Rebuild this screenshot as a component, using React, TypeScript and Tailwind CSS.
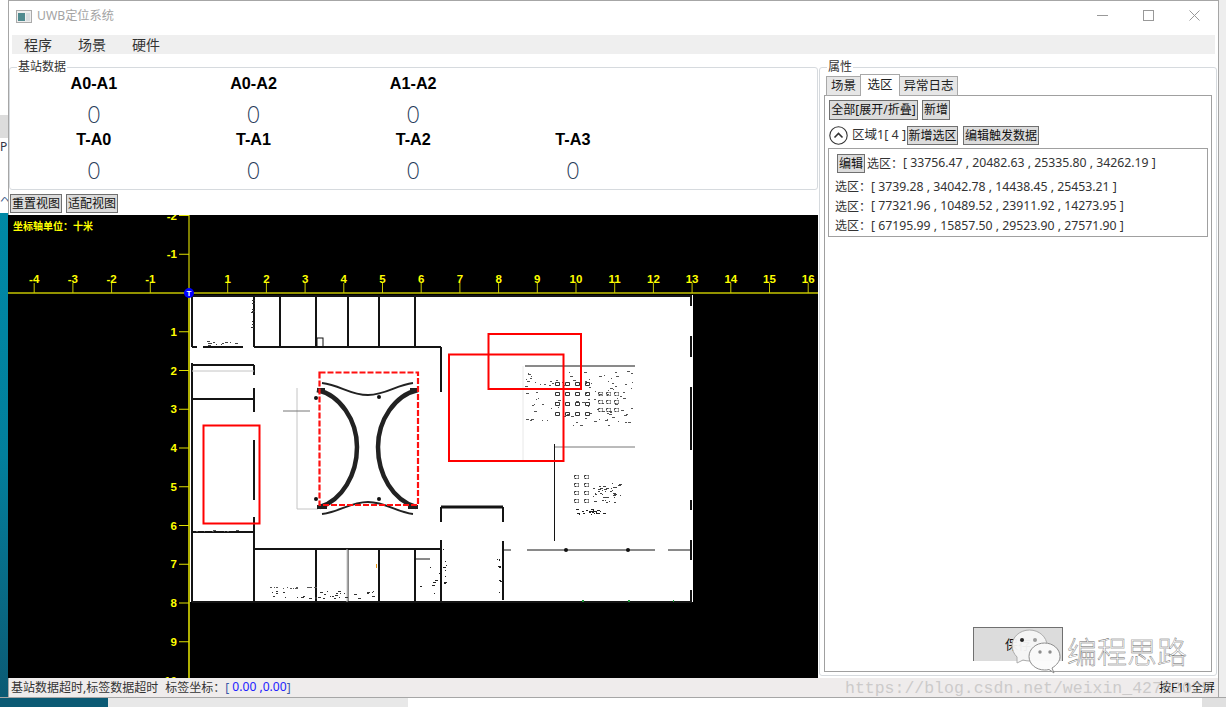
import React from "react";

const btn = "flex items-center justify-center bg-[#dcdcdc] border border-[#707070] text-[12px] text-[#111] leading-none whitespace-nowrap";

function specks(x0: number, y0: number, x1: number, y1: number, n: number, seed: number) {
  let s = seed;
  const r = () => {
    s = (s * 1103515245 + 12345) & 0x7fffffff;
    return s / 0x7fffffff;
  };
  let d = "";
  for (let i = 0; i < n; i++) {
    const x = Math.round(x0 + r() * (x1 - x0));
    const y = Math.round(y0 + r() * (y1 - y0));
    const w = 1 + Math.floor(r() * 3);
    d += `M${x} ${y}h${w}v1h-${w}z`;
  }
  return d;
}

function boxes(xs: number[], ys: number[]) {
  let d = "";
  for (const x of xs) for (const y of ys) d += `M${x}.5 ${y}.5h4v3h-4z`;
  return d;
}

const walls: [number, number, number, number, number?][] = [
  [192, 296, 692, 296, 2],
  [192, 296, 192, 347, 2],
  [192, 363, 192, 602, 2],
  [192, 602, 692, 602, 2],
  [254, 297, 254, 347, 2],
  [280, 297, 280, 347, 2],
  [316, 297, 316, 347, 2],
  [348, 297, 348, 347, 2],
  [379, 297, 379, 347, 2],
  [415, 297, 415, 347, 2],
  [192, 347, 197, 347, 2],
  [203, 347, 243, 347, 2],
  [254, 347, 441, 347, 2],
  [441, 347, 441, 392, 2],
  [192, 365, 254, 365, 2],
  [254, 365, 254, 375, 2],
  [254, 388, 254, 412, 2],
  [192, 399, 254, 399, 2],
  [254, 440, 254, 500, 2],
  [254, 517, 254, 602, 2],
  [192, 532, 254, 532, 2],
  [254, 549, 441, 549, 2],
  [316, 549, 316, 602, 2],
  [348, 549, 348, 602, 1],
  [379, 549, 379, 602, 2],
  [415, 549, 415, 602, 2],
  [441, 507, 503, 507, 3],
  [441, 507, 441, 522, 2],
  [441, 540, 441, 602, 2],
  [503, 507, 503, 522, 2],
  [503, 541, 503, 600, 2],
  [503, 550, 511, 550, 1],
  [527, 550, 655, 550, 1],
  [668, 550, 690, 550, 1],
  [554.5, 444, 554.5, 541, 1],
  [525, 366, 635, 366, 1],
  [691, 296, 691, 306, 2],
  [691, 336, 691, 357, 2],
  [691, 387, 691, 450, 2],
  [691, 500, 691, 510, 2],
  [691, 540, 691, 560, 2],
  [691, 590, 691, 602, 2],
  [415, 559, 430, 559, 1],
];

function Plan() {
  const xt = Array.from({ length: 21 }, (_, i) => i - 4).filter((n) => n !== 0);
  const yt = [-2, -1, 1, 2, 3, 4, 5, 6, 7, 8, 9, 10];
  const X = (n: number) => 189 + n * 38.7;
  const Y = (n: number) => 293 + n * 38.75;
  return (
    <svg viewBox="8 215 810 463" className="block w-[810px] h-[463px] -ml-px bg-black">
      <rect x="190" y="295" width="503" height="307" fill="#fff" />
      {walls.map(([a, b, c, d, w], i) => (
        <line key={i} x1={a} y1={b} x2={c} y2={d} stroke="#141414" strokeWidth={w ?? 1} />
      ))}
      <rect x="317" y="338" width="6" height="9" fill="none" stroke="#111" />
      <path d="M192 371H254M347 549V602M297 388V509H318" stroke="#c4c4c4" fill="none" />
      <path d="M283 411H310M555 447H635" stroke="#777" fill="none" />
      <path d="M523 366V460" stroke="#e8e8e8" fill="none" />
      <path d="M317 390C340 395 357 420 357 447C357 475 342 500 320 507" fill="none" stroke="#222" strokeWidth="4.5" />
      <path d="M418 390C395 395 378 420 378 447C378 475 393 500 416 507" fill="none" stroke="#222" strokeWidth="4.5" />
      <path d="M322 383C340 385 350 395 368 395C386 395 396 385 413 383" fill="none" stroke="#222" strokeWidth="2" />
      <path d="M322 514C340 512 350 502 368 502C386 502 396 512 413 514" fill="none" stroke="#222" strokeWidth="2" />
      <path d="M317 505h10v4h-10zM408 505h10v4h-10zM317 388h8v3h-8zM410 388h8v3h-8z" fill="#222" />
      <circle cx="316" cy="398" r="2" fill="#111" />
      <circle cx="379" cy="397" r="2" fill="#111" />
      <circle cx="316" cy="499" r="2" fill="#111" />
      <circle cx="379" cy="499" r="2" fill="#111" />
      <circle cx="566" cy="550" r="2" fill="#111" />
      <circle cx="628" cy="550" r="2" fill="#111" />
      <path d={specks(525, 370, 632, 426, 110, 7)} fill="#555" />
      <path d={boxes([555, 565, 575, 585], [382, 392, 402, 412])} fill="none" stroke="#333" />
      <path d={boxes([598, 606, 614], [392, 400, 408])} fill="none" stroke="#444" strokeDasharray="2 1" />
      <path d={boxes([574, 584], [475, 483, 491, 499])} fill="none" stroke="#333" strokeDasharray="2 1" />
      <path d={specks(592, 483, 620, 503, 40, 21)} fill="#444" />
      <path d={specks(574, 508, 604, 514, 22, 33)} fill="#222" />
      <path d={specks(205, 341, 240, 345, 12, 5)} fill="#444" />
      <path d={specks(251, 300, 252, 330, 8, 11)} fill="#333" />
      <path d={specks(265, 590, 380, 598, 36, 9)} fill="#333" />
      <path d={specks(256, 587, 315, 588, 18, 13)} fill="#555" />
      <path d={specks(194, 530, 240, 531, 8, 17)} fill="#555" />
      <path d={specks(418, 555, 440, 600, 7, 19)} fill="#222" />
      <path d={specks(443, 545, 446, 595, 8, 23)} fill="#222" />
      <path d={specks(497, 545, 501, 595, 8, 27)} fill="#222" />
      <path d="M582 600h2v2h-2zM628 600h2v2h-2zM673 600h1v2h-1z" fill="#1f9a3a" />
      <rect x="376" y="564" width="1" height="4" fill="#e59a1a" />

      <rect x="203.5" y="425.5" width="56" height="98" fill="none" stroke="#ff0000" strokeWidth="2" />
      <rect x="488.5" y="334" width="92.5" height="55" fill="none" stroke="#ff0000" strokeWidth="2" />
      <rect x="449" y="354.5" width="114.5" height="106.5" fill="none" stroke="#ff0000" strokeWidth="2" />
      <rect x="319.5" y="372.5" width="98.5" height="132.5" fill="none" stroke="#ff1010" strokeWidth="2.2" strokeDasharray="6 2" />

      <line x1="8" y1="293" x2="818" y2="293" stroke="#c4c400" strokeWidth="1.5" />
      <line x1="189" y1="215" x2="189" y2="678" stroke="#a8a800" strokeWidth="1.5" />
      <line x1="189" y1="296" x2="189" y2="678" stroke="#e0e000" strokeWidth="1" />
      {xt.map((n) => (
        <g key={n}>
          <line x1={X(n)} y1="283" x2={X(n)} y2="293" stroke="#c8c800" />
          <text x={X(n)} y="283" textAnchor="middle" fill="#ffff00" fontSize="11.5" fontWeight="700" className="[font-family:'Liberation_Sans',sans-serif]">
            {n}
          </text>
        </g>
      ))}
      {yt.map((n) => (
        <g key={n}>
          <line x1="179" y1={Y(n)} x2="189" y2={Y(n)} stroke="#e0e000" />
          <text x="177" y={Y(n) + 4} textAnchor="end" fill="#ffff00" fontSize="11.5" fontWeight="700" className="[font-family:'Liberation_Sans',sans-serif]">
            {n}
          </text>
        </g>
      ))}
      <text x="13" y="230" fill="#ffff00" fontSize="10" fontWeight="700" className="[font-family:'Noto_Sans_CJK_SC',sans-serif]">
        坐标轴单位：十米
      </text>
      <circle cx="189" cy="293" r="5" fill="#0000ff" />
      <text x="189" y="296" textAnchor="middle" fill="#fff" fontSize="8" fontWeight="700" className="[font-family:'Liberation_Sans',sans-serif]">
        T
      </text>
    </svg>
  );
}

function Metric({ label }: { label: string }) {
  return (
    <div className="flex flex-col items-center w-[159.7px] h-[56px]">
      <div className="h-[18px] flex items-center text-[16.2px] font-bold text-black [font-family:'Liberation_Sans',sans-serif]">{label}</div>
      <div className="h-[38px] pt-[9px] flex items-center text-[23px] font-extralight text-[#1f3a58] leading-none [font-family:'Inter',sans-serif]">0</div>
    </div>
  );
}

function Coords({ v }: { v: string }) {
  return (
    <>
      <span className="text-[12px]">选区：</span>
      <span className="text-[12.25px]">{v}</span>
    </>
  );
}

function RegionRow({ v }: { v: string }) {
  return (
    <div className="h-[19.7px] pl-[6px] flex items-center text-[#333] whitespace-pre">
      <Coords v={v} />
    </div>
  );
}

export default function App() {
  return (
    <div className="relative w-[1226px] h-[707px] overflow-hidden bg-white flex flex-col [font-family:'Noto_Sans','Noto_Sans_CJK_SC',sans-serif]">
      <div className="flex h-[697px]">
        <div className="w-[8px] flex flex-col overflow-hidden">
          <div className="h-[115px] bg-white" />
          <div className="h-[23px] bg-[#dcdcdc]" />
          <div className="h-[17px] bg-white text-[12px] leading-[17px] text-[#334]">P</div>
          <div className="h-[58px] bg-white pt-[38px] text-[11px] leading-[14px] text-[#3a5a88] whitespace-pre">ヘ</div>
          <div className="flex-1 bg-gradient-to-b from-[#0089a6] via-[#027f9c] to-[#0b5a74]" />
        </div>
        <div className="w-[1211px] flex flex-col border-l border-t border-r border-[#a6a6a6] bg-white">
          <div className="h-[34px] flex items-center shrink-0 pl-[7px] pr-[18px]">
            <svg width="16" height="13" viewBox="0 0 16 13" className="shrink-0 mb-[4px]">
              <rect x="0.5" y="0.5" width="15" height="12" fill="#eee" stroke="#aaa" />
              <rect x="2" y="3" width="7" height="8" fill="#4f8a8f" />
              <rect x="10" y="3" width="4" height="8" fill="#d8dde0" />
            </svg>
            <span className="ml-[5px] mb-[3px] text-[12.2px] text-[#a3a3a3]">UWB定位系统</span>
            <div className="ml-auto flex items-center gap-[35px] mb-[5px]">
              <svg width="11" height="11" viewBox="0 0 11 11"><path d="M0 5.5H11" stroke="#999" /></svg>
              <svg width="11" height="11" viewBox="0 0 11 11"><rect x="0.5" y="0.5" width="10" height="10" fill="none" stroke="#999" /></svg>
              <svg width="11" height="11" viewBox="0 0 11 11"><path d="M0.5 0.5L10.5 10.5M10.5 0.5L0.5 10.5" stroke="#999" /></svg>
            </div>
          </div>
          <div className="h-[19px] mx-[3px] shrink-0 bg-[#efefef] flex items-center pl-[12px] gap-[26px] text-[14px] text-[#333]">
            <span>程序</span>
            <span>场景</span>
            <span>硬件</span>
          </div>
          <div className="flex-1 flex min-h-0">
            <div className="w-[809px] flex flex-col pt-[13px]">
              <div className="relative h-[123px] w-[809px] shrink-0 border border-[#d6dade] rounded-[3px] pl-[4px] pt-[6px]">
                <span className="absolute left-[7px] -top-[8px] bg-white px-px text-[12px] leading-[14px] text-[#333]">基站数据</span>
                <div className="flex">
                  <Metric label="A0-A1" />
                  <Metric label="A0-A2" />
                  <Metric label="A1-A2" />
                </div>
                <div className="flex">
                  <Metric label="T-A0" />
                  <Metric label="T-A1" />
                  <Metric label="T-A2" />
                  <Metric label="T-A3" />
                </div>
              </div>
              <div className="flex gap-[4px] mt-[4px] ml-px h-[19px] shrink-0">
                <div className={`${btn} w-[52px]`}>重置视图</div>
                <div className={`${btn} w-[52px]`}>适配视图</div>
              </div>
              <div className="mt-[2px] shrink-0">
                <Plan />
              </div>
            </div>
            <div className="flex-1 pt-[13px] pl-[1px] pr-[1px] pb-[2px] flex">
              <div className="relative flex-1 flex flex-col border border-[#d6dade] rounded-[3px] pl-[4px] pr-[4px] pt-[6px] pb-[3px]">
                <span className="absolute left-[7px] -top-[8px] bg-white px-px text-[12px] leading-[14px] text-[#333]">属性</span>
                <div className="flex items-end pl-[2px] h-[22px] shrink-0 -mb-px relative z-10 text-[12.5px] text-[#222]">
                  <div className="w-[35px] h-[20px] flex items-center justify-center bg-[#e6e6e6] border border-[#a8a8a8]">场景</div>
                  <div className="w-[40px] h-[22px] flex items-center justify-center bg-white border border-b-0 border-[#a8a8a8] -ml-px">选区</div>
                  <div className="w-[59px] h-[20px] flex items-center justify-center bg-[#e6e6e6] border border-[#a8a8a8] -ml-px">异常日志</div>
                </div>
                <div className="flex-1 flex flex-col border border-[#a0a0a0] px-[3px] pt-[4px] pb-[10px] min-h-0">
                  <div className="flex gap-[4px] ml-px h-[20px] shrink-0">
                    <div className={`${btn} w-[89px]`}>全部[展开/折叠]</div>
                    <div className={`${btn} w-[28px]`}>新增</div>
                  </div>
                  <div className="flex items-center ml-px mt-[6px] h-[19px] shrink-0">
                    <svg width="19" height="19" viewBox="0 0 19 19" className="shrink-0">
                      <circle cx="9.5" cy="9.5" r="8.7" fill="#fff" stroke="#333" strokeWidth="1.1" />
                      <path d="M5.5 11.5L9.5 7.5L13.5 11.5" fill="none" stroke="#333" strokeWidth="1.6" />
                    </svg>
                    <span className="ml-[4px] w-[55px] text-[12.5px] text-[#333] whitespace-pre">区域1[ 4 ]</span>
                    <div className={`${btn} w-[51px] h-[19px]`}>新增选区</div>
                    <div className={`${btn} w-[76px] h-[19px] ml-[5px]`}>编辑触发数据</div>
                  </div>
                  <div className="mt-[3px] h-[89px] w-[380px] shrink-0 border border-[#a0a0a0] pt-[5px]">
                    <div className="flex items-center pl-[8px] h-[19px] text-[#333] whitespace-pre">
                      <div className={`${btn} w-[28px] h-[19px] mr-[2px]`}>编辑</div>
                      <Coords v="[ 33756.47 , 20482.63 , 25335.80 , 34262.19 ]" />
                    </div>
                    <div className="mt-[4px]">
                      <RegionRow v="[ 3739.28 , 34042.78 , 14438.45 , 25453.21 ]" />
                      <RegionRow v="[ 77321.96 , 10489.52 , 23911.92 , 14273.95 ]" />
                      <RegionRow v="[ 67195.99 , 15857.50 , 29523.90 , 27571.90 ]" />
                    </div>
                  </div>
                  <div className="mt-auto self-end mr-[145px] w-[90px] h-[34px] bg-[#dcdcdc] border border-b-0 border-[#707070] flex items-center justify-center text-[13px] text-[#111]">保存</div>
                </div>
              </div>
            </div>
          </div>
          <div className="h-[19px] shrink-0 bg-[#efecec] flex items-center pl-[2px] pr-[3px] text-[12px] text-[#333] whitespace-pre">
            <span>基站数据超时,标签数据超时</span>
            <span className="ml-[7px]">标签坐标：</span>
            <span className="text-[#3a5aa8]">[ </span>
            <span className="text-[#2222ff] text-[12.1px]">0.00 ,0.00</span>
            <span className="text-[#3a5aa8]">]</span>
            <span className="ml-auto text-[#111]">按F11全屏</span>
          </div>
        </div>
        <div className="flex-1 bg-[#eeeeee]" />
      </div>
      <div className="flex flex-1 border-t border-[#a6a6a6]">
        <div className="w-[108px] bg-[#0b5a74]" />
        <div className="w-[300px] bg-[#e8e8e8]" />
        <div className="flex-1 bg-white" />
        <div className="w-[24px] bg-[#e0e0e0]" />
      </div>

      <svg viewBox="0 0 52 46" className="absolute left-[1010px] top-[628px] w-[52px] h-[46px] opacity-95">
        <path d="M7 29C4 26 2 22 2 17.5C2 9 10 2 19.5 2C29 2 37 9 37 17.5C37 26 29 33 19.5 33C17 33 15 32.5 13 32L7 35Z" fill="#f7f7f7" stroke="#aaa" />
        <circle cx="12" cy="12" r="2" fill="#222" />
        <circle cx="25" cy="12" r="2" fill="#999" />
        <path d="M42 40C47 37 50 33 50 28.5C50 21 43 15 34.5 15C26 15 19 21 19 28.5C19 36 26 42 34.5 42C36 42 37.5 42 39 41.5L44 45Z" fill="#fbfbfb" stroke="#888" />
        <circle cx="30" cy="24" r="1.7" fill="#888" />
        <circle cx="40" cy="24" r="1.7" fill="#888" />
      </svg>
      <div className="absolute left-[1067px] top-[633px] text-[30px] leading-[38px] font-light text-white [-webkit-text-stroke:0.4px_#666]">编程思路</div>
      <div className="absolute left-[845px] top-[679px] text-[16.5px] leading-[19px] text-[#b5b5b5] opacity-60 whitespace-pre [font-family:'Liberation_Mono',monospace]">https://blog.csdn.net/weixin_42762025</div>
    </div>
  );
}
